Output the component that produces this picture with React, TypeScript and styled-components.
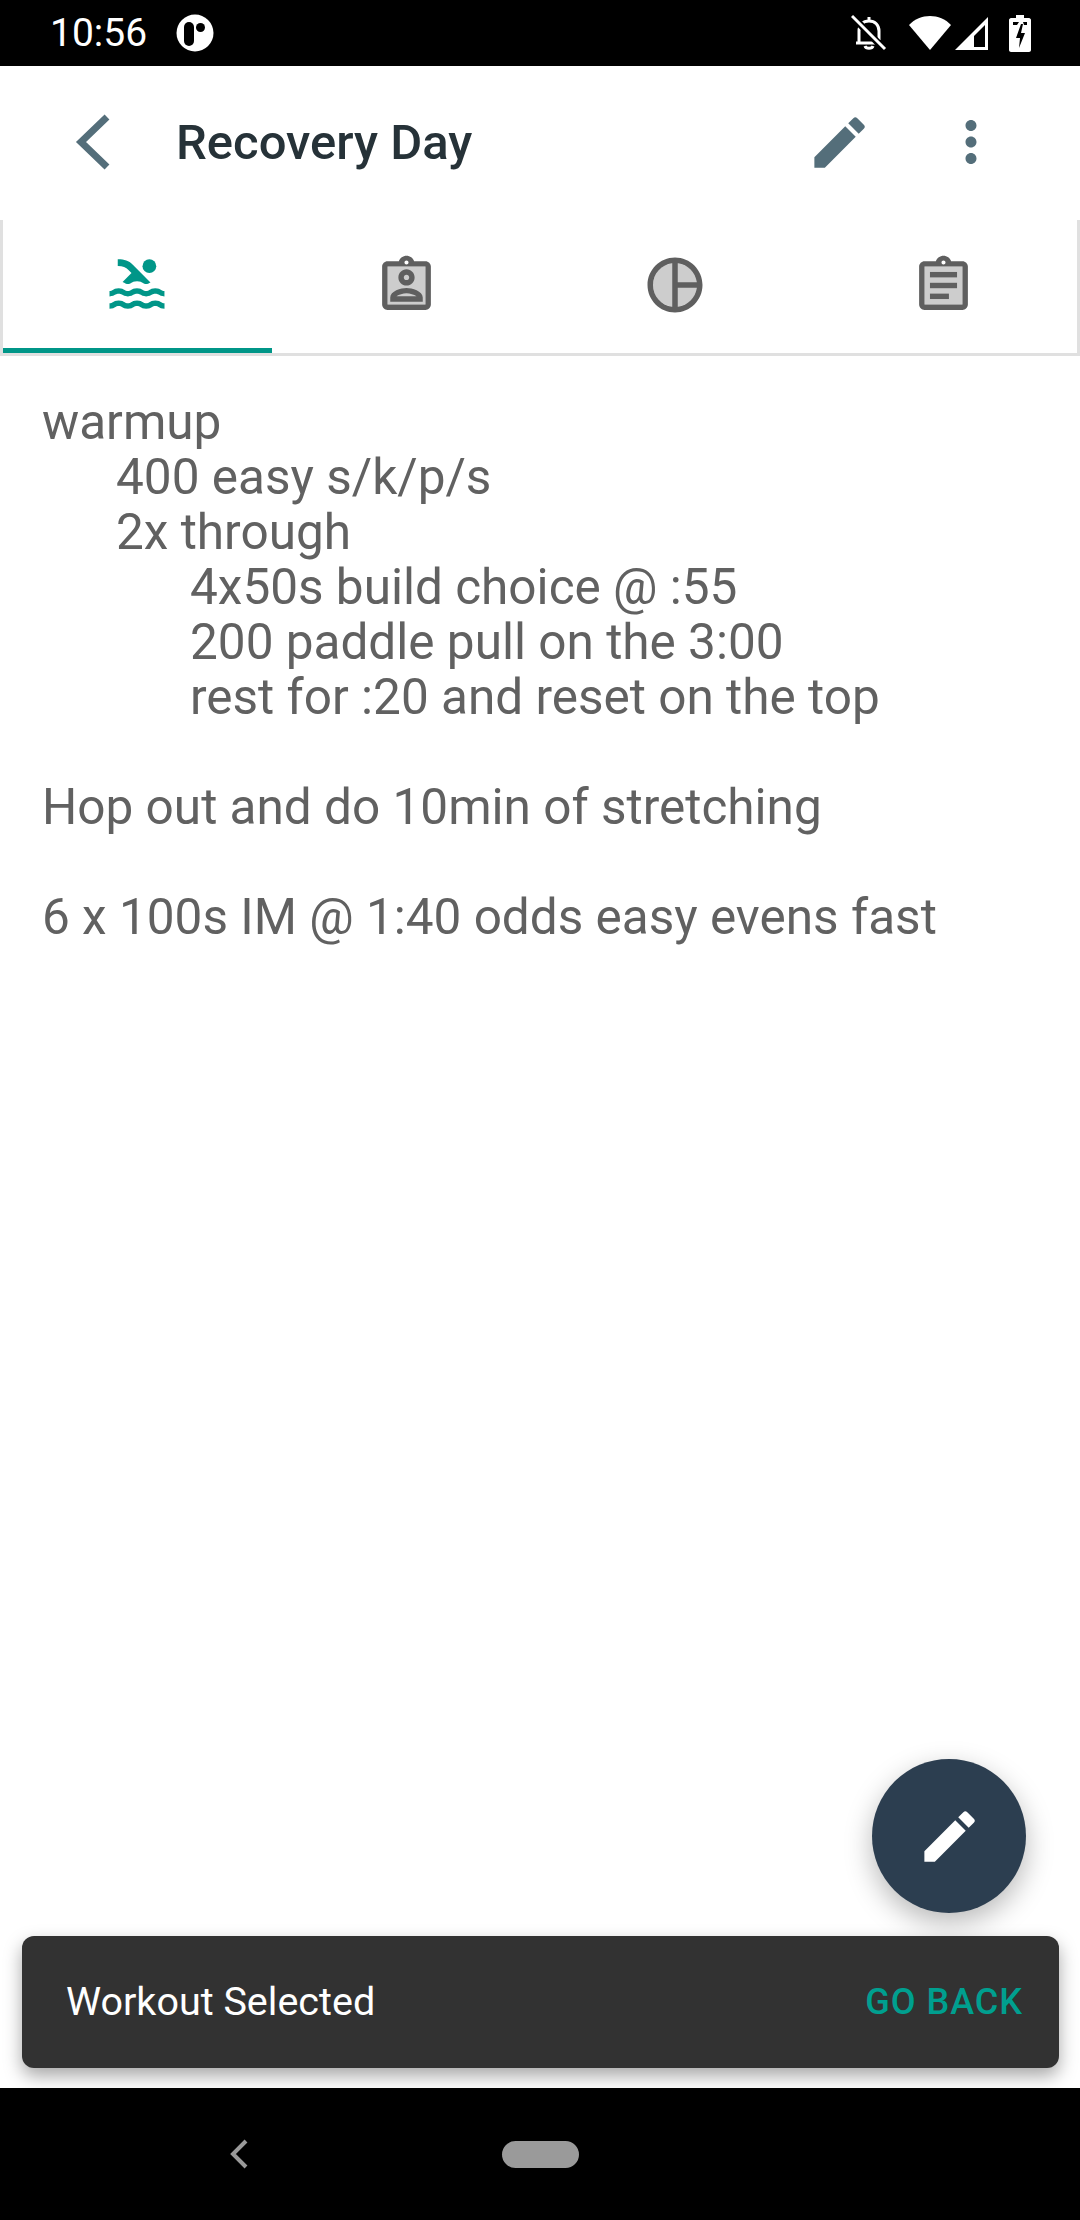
import { FC } from 'react'
import { MdEdit, MdMoreVert, MdPool } from 'react-icons/md'
import styled, { createGlobalStyle } from 'styled-components'

const WORKOUT: { text: string, indent: number }[] = [
  { text: 'warmup', indent: 0 },
  { text: '400 easy s/k/p/s', indent: 1 },
  { text: '2x through', indent: 1 },
  { text: '4x50s build choice @ :55', indent: 2 },
  { text: '200 paddle pull on the 3:00', indent: 2 },
  { text: 'rest for :20 and reset on the top', indent: 2 },
  { text: '', indent: 0 },
  { text: 'Hop out and do 10min of stretching', indent: 0 },
  { text: '', indent: 0 },
  { text: '6 x 100s IM @ 1:40 odds easy evens fast', indent: 0 },
]

const ClipboardIcon: FC<{ kind: 'person' | 'lines' }> = ({ kind }) => (
  <svg width={65} height={65} viewBox="0 0 24 24">
    <rect x={5} y={5} width={14} height={14} fill="#cdcdcd" />
    <path fill="#5f5f5f" fillRule="evenodd" d="M19 3h-4.18C14.4 1.84 13.3 1 12 1s-2.4.84-2.82 2H5c-1.1 0-2 .9-2 2v14c0 1.1.9 2 2 2h14c1.1 0 2-.9 2-2V5c0-1.1-.9-2-2-2zm-7-.25c.41 0 .75.34.75.75s-.34.75-.75.75-.75-.34-.75-.75.34-.75.75-.75zM19 19H5V5h14v14z" />
    {kind === 'person' ? (
      <>
        <path fill="#5f5f5f" fillRule="evenodd" d="M12 6c1.66 0 3 1.34 3 3s-1.34 3-3 3-3-1.34-3-3 1.34-3 3-3zm0 2c-.55 0-1 .45-1 1s.45 1 1 1 1-.45 1-1-.45-1-1-1z" />
        <path fill="#5f5f5f" fillRule="evenodd" d="M6 18v-1.53c0-2.5 3.97-3.58 6-3.58s6 1.08 6 3.58V18H6zm2.3-2c.9-.6 2.4-1.1 3.7-1.1s2.8.5 3.7 1.1H8.300z" />
      </>
    ) : (
      <>
        <rect x={7} y={7} width={10} height={2} fill="#5f5f5f" />
        <rect x={7} y={11} width={10} height={2} fill="#5f5f5f" />
        <rect x={7} y={15} width={7} height={2} fill="#5f5f5f" />
      </>
    )}
  </svg>
)

const PieIcon: FC = () => (
  <svg width={66} height={66} viewBox="0 0 24 24">
    <circle cx={12} cy={12} r={8} fill="#cdcdcd" />
    <path fill="#5f5f5f" d="M12 2C6.48 2 2 6.48 2 12s4.48 10 10 10 10-4.48 10-10S17.52 2 12 2zm-1 17.93c-3.95-.49-7-3.85-7-7.93s3.05-7.44 7-7.93v15.860zm2 0V13h6.930c-.46 3.61-3.32 6.47-6.930 6.930zM13 11V4.070c3.610.46 6.470 3.320 6.930 6.930H13z" />
  </svg>
)

const App: FC = () => {
  return (
    <Screen>
      <GlobalStyle />
      <StatusBar>
        <Clock>10:56</Clock>
        <svg width={38} height={38} viewBox="0 0 38 38">
          <circle cx={19} cy={19} r={18.5} fill="#fff" />
          <rect x={8} y={8} width={10} height={24} rx={5} fill="#000" />
          <circle cx={24.500} cy={13.500} r={4.500} fill="#000" />
        </svg>
        <StatusIcons>
          <svg width={36} height={38} viewBox="0 0 36 38">
            <path d="M18 3v3M8 28V17c0-6 4-10 10-10s10 4 10 10v9M5 29h20M14 32c1 3 7 3 8 0" fill="none" stroke="#fff" strokeWidth={3} />
            <path d="M2 3l32 33" stroke="#000" strokeWidth={7} />
            <path d="M1 2l33 33" stroke="#fff" strokeWidth={3} />
          </svg>
          <WifiIcon width={42} height={36} viewBox="0 0 42 36">
            <path d="M0 10C11-2 31-2 42 10L21 35z" fill="#fff" />
          </WifiIcon>
          <SignalIcon width={35} height={35} viewBox="0 0 35 35">
            <path d="M34 1v33H1z" fill="#fff" />
            <path d="M31 9v22h-11v-11z" fill="#000" />
          </SignalIcon>
          <BatteryIcon width={22} height={37} viewBox="0 0 22 37">
            <path fill="#fff" d="M7 0h8v3h5c1 0 2 1 2 2v30c0 1-1 2-2 2H2c-1 0-2-1-2-2V5c0-1 1-2 2-2h5z" />
            <path fill="#000" d="M4 7h6l-2 3H4zM14 7h4v3h-3zM12 9l-5 14h4l-1 10 6-15h-4l2-9z" />
          </BatteryIcon>
        </StatusIcons>
      </StatusBar>

      <Toolbar>
        <BackButton>
          <svg width={38} height={56} viewBox="0 0 38 56">
            <path d="M33 3L7 28l26 25" fill="none" stroke="#546e7a" strokeWidth={7} />
          </svg>
        </BackButton>
        <Title>Recovery Day</Title>
        <EditAction><MdEdit size={67} color="#546e7a" /></EditAction>
        <MoreAction><MdMoreVert size={66} color="#546e7a" /></MoreAction>
      </Toolbar>

      <TabBar>
        <Tab $active><MdPool size={66} color="#009688" /></Tab>
        <Tab><ClipboardIcon kind="person" /></Tab>
        <Tab><PieIcon /></Tab>
        <Tab><ClipboardIcon kind="lines" /></Tab>
      </TabBar>

      <Content>
        {WORKOUT.map((line, i) => (
          <WorkoutLine key={i} $indent={line.indent}>{line.text}</WorkoutLine>
        ))}
        <Fab>
          <MdEdit size={67} color="#fff" />
        </Fab>
        <Snackbar>
          <SnackText>Workout Selected</SnackText>
          <SnackAction>GO BACK</SnackAction>
        </Snackbar>
      </Content>

      <NavBar>
        <svg width={20} height={30} viewBox="0 0 20 30">
          <path d="M17 2L4 15l13 13" fill="none" stroke="#9a9a9a" strokeWidth={4} />
        </svg>
        <HomePill />
      </NavBar>
    </Screen>
  )
}

export default App

const GlobalStyle = createGlobalStyle`
  html, body {
    margin: 0;
    padding: 0;
    background: #fff;
  }
`
const Screen = styled.div`
  display: flex;
  flex-direction: column;
  width: 1080px;
  height: 2220px;
  overflow: hidden;
  background: #fff;
  font-family: Roboto, "Liberation Sans", sans-serif;
`
const StatusBar = styled.div`
  display: flex;
  align-items: center;
  flex-shrink: 0;
  box-sizing: border-box;
  height: 66px;
  padding: 0 49px 0 50px;
  background: #000;
`
const Clock = styled.div`
  width: 126px;
  color: #fff;
  font-size: 39px;
`
const StatusIcons = styled.div`
  display: flex;
  align-items: center;
  margin-left: auto;
`
const WifiIcon = styled.svg`
  margin-left: 22px;
`
const SignalIcon = styled.svg`
  margin-left: 3px;
`
const BatteryIcon = styled.svg`
  margin-left: 20px;
`
const Toolbar = styled.div`
  display: flex;
  align-items: center;
  flex-shrink: 0;
  height: 152px;
  padding-left: 74px;
`
const BackButton = styled.div`
  display: flex;
  width: 102px;
`
const Title = styled.div`
  flex: 1;
  color: #263238;
  font-size: 49px;
  font-weight: 500;
`
const EditAction = styled.div`
  display: flex;
  margin-right: 65px;
`
const MoreAction = styled.div`
  display: flex;
  margin-right: 76px;
`
const TabBar = styled.div`
  display: flex;
  flex-shrink: 0;
  box-sizing: border-box;
  height: 136px;
  margin-top: 2px;
  border: solid #e0e0e0;
  border-width: 0 3px 3px;
`
const Tab = styled.div<{ $active?: boolean }>`
  flex: 0 0 25%;
  display: flex;
  align-items: center;
  justify-content: center;
  box-sizing: border-box;
  padding: ${props => props.$active ? '0' : '2px 0 0 2px'};
  border-bottom: 5px solid ${props => props.$active ? '#009688' : 'transparent'};
`
const Content = styled.div`
  position: relative;
  flex: 1;
  padding-top: 39px;
  padding-left: 42px;
`
const WorkoutLine = styled.div<{ $indent: number }>`
  height: 55px;
  padding-left: ${props => props.$indent * 74}px;
  color: #616161;
  font-size: 49.5px;
  line-height: 55px;
  white-space: pre;
`
const Fab = styled.div`
  position: absolute;
  right: 54px;
  bottom: 175px;
  display: flex;
  align-items: center;
  justify-content: center;
  width: 154px;
  height: 154px;
  border-radius: 50%;
  background: #2c3e50;
  box-shadow: 0 10px 28px rgba(0, 0, 0, .28);
`
const Snackbar = styled.div`
  position: absolute;
  left: 22px;
  right: 21px;
  bottom: 20px;
  display: flex;
  align-items: center;
  justify-content: space-between;
  box-sizing: border-box;
  height: 132px;
  padding: 0 36px 0 44px;
  border-radius: 12px;
  background: #323232;
  box-shadow: 0 8px 18px rgba(0, 0, 0, .35);
`
const SnackText = styled.div`
  color: #fff;
  font-size: 39.5px;
  margin-top: -2px;
`
const SnackAction = styled.div`
  color: #009f8f;
  font-size: 36px;
  font-weight: 500;
  letter-spacing: 1px;
`
const NavBar = styled.div`
  display: flex;
  align-items: center;
  flex-shrink: 0;
  height: 132px;
  padding: 0 0 0 229px;
  background: #000;
`
const HomePill = styled.div`
  width: 77px;
  height: 27px;
  margin-left: 253px;
  border-radius: 14px;
  background: #9a9a9a;
`
